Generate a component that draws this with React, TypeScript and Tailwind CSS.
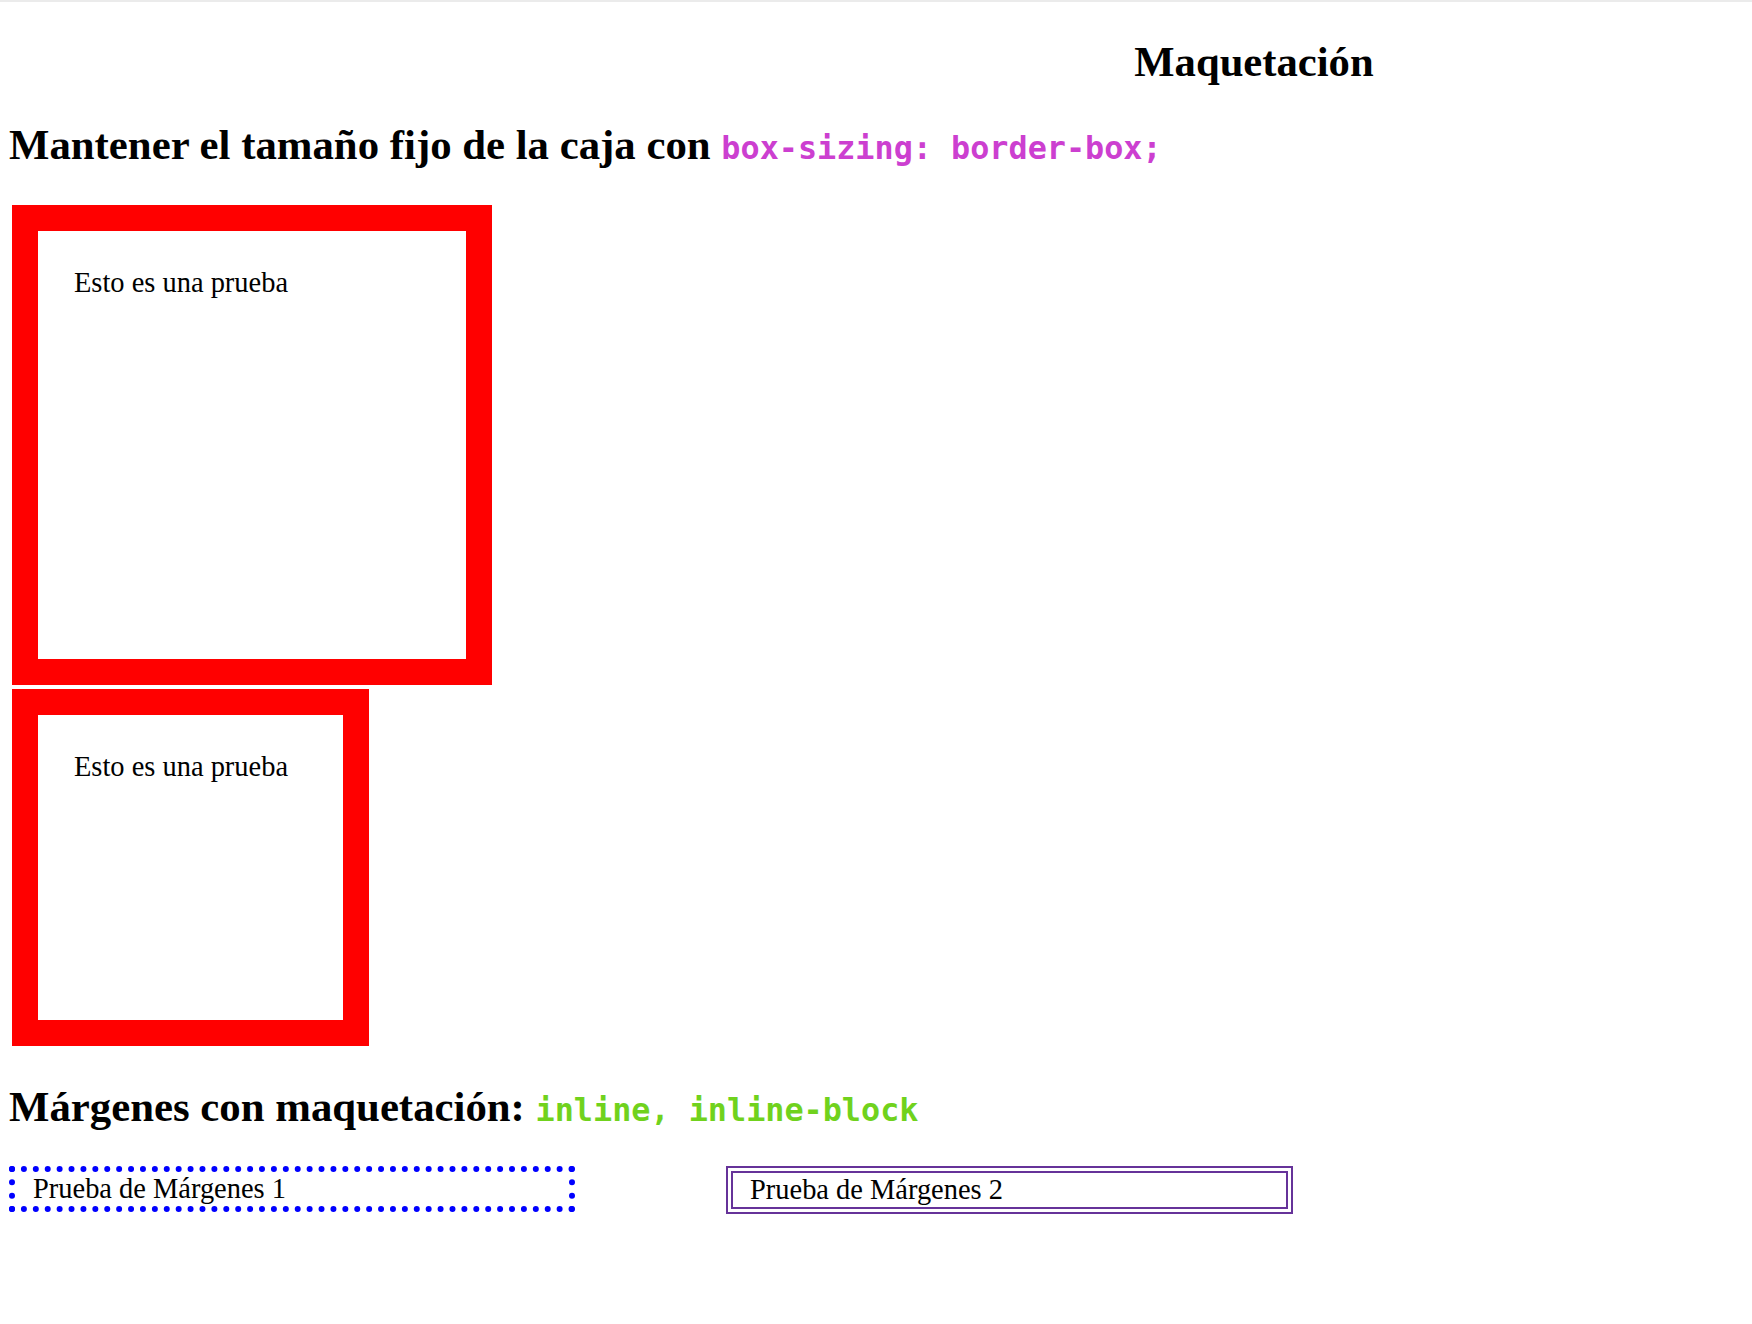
export default function App() {
  const serif = "font-['Liberation_Serif','Times_New_Roman',serif]";
  const mono = "font-['DejaVu_Sans_Mono','Liberation_Mono',monospace] font-bold text-[31.8px]";

  return (
    <div className={`min-h-screen bg-white text-black border-t-2 border-[#ebebeb] ${serif} text-[28.44px] leading-[1.15]`}>
      {/* Title */}
      <h1 className="pl-[756px] text-center text-[42.67px] font-bold leading-[1.15] mt-[35px]">Maquetación</h1>

      {/* box-sizing section */}
      <h2 className="ml-[9px] mt-[34px] text-[42.8px] font-bold leading-[1.15]">
        Mantener el tamaño fijo de la caja con{' '}
        <code className={`${mono} text-[#cc3fd0]`}>box-sizing: border-box;</code>
      </h2>

      <div className="ml-[12px] mt-[36px] flex flex-col gap-[4px]">
        <div className="w-[480px] h-[480px] border-[26px] border-[#ff0000] px-[36px] pt-[36px]">Esto es una prueba</div>
        <div className="w-[357px] h-[357px] border-[26px] border-[#ff0000] px-[36px] pt-[36px]">Esto es una prueba</div>
      </div>

      {/* inline / inline-block section */}
      <h2 className="ml-[9px] mt-[36px] text-[42.8px] font-bold leading-[1.15]">
        Márgenes con maquetación:{' '}
        <code className={`${mono} text-[#70d21d]`}>inline, inline-block</code>
      </h2>

      <div className="ml-[9px] mt-[35px] flex items-start gap-[151px]">
        <div className="w-[566px] border-[6px] border-dotted border-[#0000ff] pl-[18px] pt-[1px]">Prueba de Márgenes 1</div>
        <div className="w-[567px] border-[7px] border-double border-[#663399] pl-[17px] pt-[1px]">Prueba de Márgenes 2</div>
      </div>
    </div>
  );
}
